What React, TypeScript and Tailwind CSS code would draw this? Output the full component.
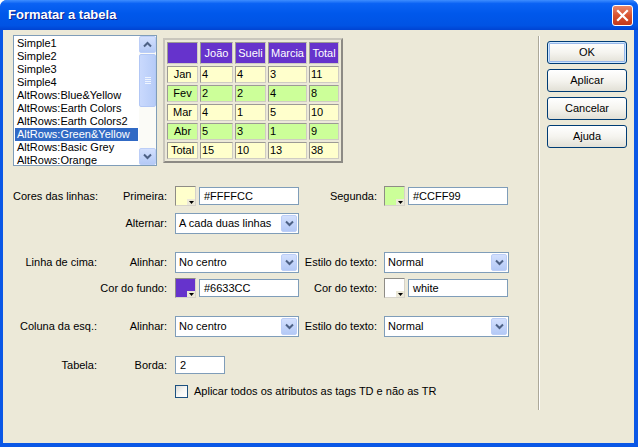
import React from "react";

const items = [
  "Simple1",
  "Simple2",
  "Simple3",
  "Simple4",
  "AltRows:Blue&Yellow",
  "AltRows:Earth Colors",
  "AltRows:Earth Colors2",
  "AltRows:Green&Yellow",
  "AltRows:Basic Grey",
  "AltRows:Orange",
];

const rows = [
  { name: "Jan", vals: ["4", "4", "3", "11"], bg: "bg-[#FFFFCC]" },
  { name: "Fev", vals: ["2", "2", "4", "8"], bg: "bg-[#CCFF99]" },
  { name: "Mar", vals: ["4", "1", "5", "10"], bg: "bg-[#FFFFCC]" },
  { name: "Abr", vals: ["5", "3", "1", "9"], bg: "bg-[#CCFF99]" },
  { name: "Total", vals: ["15", "10", "13", "38"], bg: "bg-[#FFFFCC]" },
];

const cellBorder = "border border-[#9C9A94] border-r-[#CFCCC3] border-b-[#CFCCC3]";

const Chevron = ({ up = false }: { up?: boolean }) => (
  <svg width="9" height="7" viewBox="0 0 9 7">
    <path
      d={up ? "M1 5.5 L4.5 2 L8 5.5" : "M1 1.5 L4.5 5 L8 1.5"}
      fill="none"
      stroke="#4D6185"
      strokeWidth="2"
    />
  </svg>
);

// botao azul do combo / scrollbar
const BlueButton = ({ up = false, className = "" }: { up?: boolean; className?: string }) => (
  <div
    className={`flex items-center justify-center rounded-[2px] border border-[#BCCEF7] bg-linear-to-b from-[#D3E0FD] to-[#B4C9F6] ${className}`}
  >
    <Chevron up={up} />
  </div>
);

const Select = ({ value, w }: { value: string; w: string }) => (
  <div className={`${w} h-[21px] border border-[#7F9DB9] bg-white flex p-px`}>
    <span className="flex-1 pl-[2px] leading-[17px]">{value}</span>
    <BlueButton className="w-[16px]" />
  </div>
);

const Swatch = ({ color }: { color: string }) => (
  <div className={`relative w-[21px] h-[20px] border border-[#8E8C86] border-r-[#D6D3CA] border-b-[#D6D3CA] ${color}`}>
    <div className="absolute right-0 bottom-0 w-[8px] h-[6px] bg-[#ECE9D8] flex items-center justify-center">
      <svg width="5" height="3" viewBox="0 0 5 3">
        <polygon points="0,0 5,0 2.5,3" fill="#000" />
      </svg>
    </div>
  </div>
);

const Input = ({ value, w = "w-[100px]" }: { value: string; w?: string }) => (
  <div className={`${w} h-[18px] border border-[#7F9DB9] bg-white pl-[4px] leading-[16px]`}>{value}</div>
);

const ColorField = ({ color, value }: { color: string; value: string }) => (
  <div className="flex items-center gap-[3px]">
    <Swatch color={color} />
    <Input value={value} />
  </div>
);

const XpButton = ({ label, def = false }: { label: string; def?: boolean }) => (
  <div
    className={`w-[80px] h-[23px] rounded-[3px] border border-[#003C74] bg-linear-to-b from-white via-[#F5F4EF] to-[#E2E0D6] flex items-center justify-center ${
      def ? "shadow-[inset_0_0_0_1px_#CEE7FF,inset_0_0_0_2px_#98B8EA]" : ""
    }`}
  >
    {label}
  </div>
);

export default function App() {
  return (
    <div className="w-[638px] h-[447px] bg-white font-['Liberation_Sans',Arial,sans-serif] text-[11px] text-black">
      <div className="w-full h-full flex flex-col rounded-t-[7px] overflow-hidden bg-[#0A57E6]">
        {/* barra de titulo */}
        <div className="h-[30px] shrink-0 flex items-center justify-between pl-[8px] pr-[5px] bg-[linear-gradient(to_bottom,#3E8DFF_0%,#0A62F4_12%,#0058EB_45%,#0053E4_85%,#0043D2_100%)]">
          <span className="text-white font-bold text-[13px] [text-shadow:1px_1px_0_#0A1E8C]">Formatar a tabela</span>
          <div className="w-[21px] h-[21px] rounded-[3px] border border-white bg-linear-to-b from-[#E8876B] via-[#D9532F] to-[#C2381A] flex items-center justify-center">
            <svg width="13" height="13" viewBox="0 0 13 13">
              <path d="M2 2 L11 11 M11 2 L2 11" stroke="#fff" strokeWidth="2.2" strokeLinecap="square" />
            </svg>
          </div>
        </div>

        {/* corpo */}
        <div className="flex-1 flex ml-[3px] mr-[4px] mb-[4px] bg-[#ECE9D8]">
          <div className="w-[535px] pl-[10px] pt-[5px] flex flex-col">
            {/* lista + preview */}
            <div className="flex items-start gap-[6px]">
              <div className="w-[144px] h-[131px] border border-[#7F9DB9] bg-white flex">
                <div className="flex-1 p-px">
                  {items.map((it) => (
                    <div
                      key={it}
                      className={`h-[13px] leading-[13px] pl-[2px] whitespace-nowrap ${
                        it === "AltRows:Green&Yellow" ? "bg-[#316AC5] text-white" : ""
                      }`}
                    >
                      {it}
                    </div>
                  ))}
                </div>
                <div className="w-[17px] flex flex-col bg-[#FBFBF7]">
                  <BlueButton up className="h-[17px]" />
                  <div className="flex-1 pt-px">
                    <div className="h-[53px] rounded-[2px] border border-[#B2C7F5] bg-linear-to-r from-[#C9D9FD] to-[#B7CCF8] flex flex-col items-center justify-center gap-px">
                      <div className="w-[6px] h-px bg-[#EEF4FE]" />
                      <div className="w-[6px] h-px bg-[#EEF4FE]" />
                      <div className="w-[6px] h-px bg-[#EEF4FE]" />
                      <div className="w-[6px] h-px bg-[#EEF4FE]" />
                    </div>
                  </div>
                  <BlueButton className="h-[17px]" />
                </div>
              </div>

              <div className="mt-[3px] grid grid-cols-[31px_33px_31px_39px_30px] grid-rows-[22px_17px_17px_17px_17px_17px] gap-[2px] p-[2px] border-2 border-[#C9C6BC] border-r-[#8C8A84] border-b-[#8C8A84]">
                <div className={`${cellBorder} bg-[#6633CC]`} />
                {["João", "Sueli", "Marcia", "Total"].map((h) => (
                  <div key={h} className={`${cellBorder} bg-[#6633CC] text-white flex items-center justify-center`}>
                    {h}
                  </div>
                ))}
                {rows.map((r) => (
                  <React.Fragment key={r.name}>
                    <div className={`${cellBorder} ${r.bg} flex items-center justify-center`}>{r.name}</div>
                    {r.vals.map((v, i) => (
                      <div key={i} className={`${cellBorder} ${r.bg} flex items-center pl-px`}>
                        {v}
                      </div>
                    ))}
                  </React.Fragment>
                ))}
              </div>
            </div>

            {/* Cores das linhas */}
            <div className="flex items-center h-[22px] mt-[19px]">
              <div className="w-[84px] text-right whitespace-nowrap">Cores das linhas:</div>
              <div className="w-[70px] text-right">Primeira:</div>
              <div className="ml-[8px]">
                <ColorField color="bg-[#FFFFCC]" value="#FFFFCC" />
              </div>
              <div className="w-[78px] text-right">Segunda:</div>
              <div className="ml-[7px]">
                <ColorField color="bg-[#CCFF99]" value="#CCFF99" />
              </div>
            </div>
            <div className="flex items-center h-[22px] mt-[5px]">
              <div className="w-[84px]" />
              <div className="w-[70px] text-right">Alternar:</div>
              <div className="ml-[8px]">
                <Select value="A cada duas linhas" w="w-[124px]" />
              </div>
            </div>

            {/* Linha de cima */}
            <div className="flex items-center h-[22px] mt-[17px]">
              <div className="w-[84px] text-right whitespace-nowrap">Linha de cima:</div>
              <div className="w-[70px] text-right">Alinhar:</div>
              <div className="ml-[8px]">
                <Select value="No centro" w="w-[124px]" />
              </div>
              <div className="w-[78px] text-right whitespace-nowrap">Estilo do texto:</div>
              <div className="ml-[7px]">
                <Select value="Normal" w="w-[125px]" />
              </div>
            </div>
            <div className="flex items-center h-[22px] mt-[4px]">
              <div className="w-[84px]" />
              <div className="w-[70px] text-right whitespace-nowrap">Cor do fundo:</div>
              <div className="ml-[8px]">
                <ColorField color="bg-[#6633CC]" value="#6633CC" />
              </div>
              <div className="w-[78px] text-right whitespace-nowrap">Cor do texto:</div>
              <div className="ml-[7px]">
                <ColorField color="bg-white" value="white" />
              </div>
            </div>

            {/* Coluna da esquerda */}
            <div className="flex items-center h-[22px] mt-[16px]">
              <div className="w-[84px] text-right whitespace-nowrap">Coluna da esq.:</div>
              <div className="w-[70px] text-right">Alinhar:</div>
              <div className="ml-[8px]">
                <Select value="No centro" w="w-[124px]" />
              </div>
              <div className="w-[78px] text-right whitespace-nowrap">Estilo do texto:</div>
              <div className="ml-[7px]">
                <Select value="Normal" w="w-[125px]" />
              </div>
            </div>

            {/* Tabela */}
            <div className="flex items-center h-[22px] mt-[17px]">
              <div className="w-[84px] text-right">Tabela:</div>
              <div className="w-[70px] text-right">Borda:</div>
              <div className="ml-[8px]">
                <Input value="2" w="w-[50px]" />
              </div>
            </div>
            <div className="flex items-center h-[22px] mt-[4px] pl-[162px] gap-[6px]">
              <div className="w-[13px] h-[13px] border border-[#1C5180] bg-linear-to-br from-[#DCDCD7] via-[#F6F6F3] to-white" />
              <span>Aplicar todos os atributos as tags TD e não as TR</span>
            </div>
          </div>

          {/* separador */}
          <div className="mt-[6px] h-[374px] w-[2px] border-l border-[#ACA899] bg-white" />

          {/* botoes */}
          <div className="pl-[7px] pt-[11px] flex flex-col gap-[5px]">
            <XpButton label="OK" def />
            <XpButton label="Aplicar" />
            <XpButton label="Cancelar" />
            <XpButton label="Ajuda" />
          </div>
        </div>
      </div>
    </div>
  );
}
